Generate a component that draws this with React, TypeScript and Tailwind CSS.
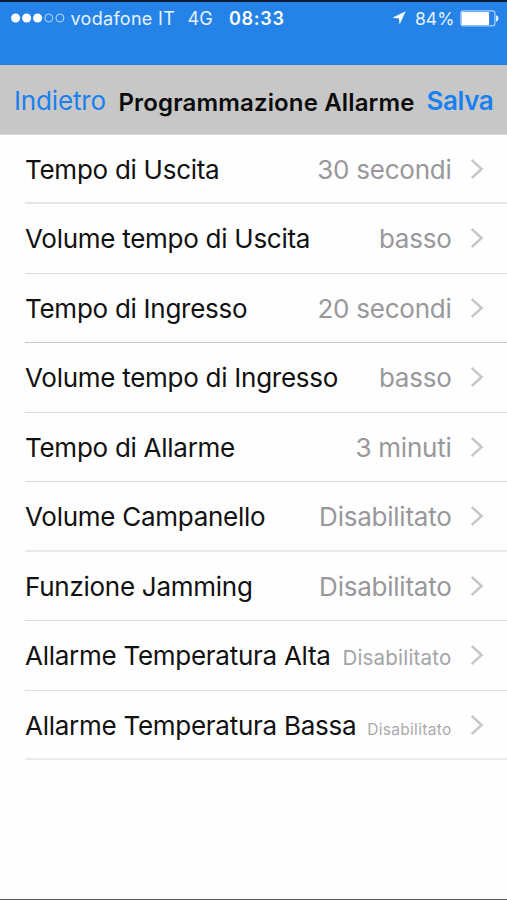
type Setting = {
  label: string;
  value: string;
  valueClass?: string;
  line: string;
};

const settings: Setting[] = [
  { label: 'Tempo di Uscita', value: '30 secondi', line: 'h-[2px] bg-[#e6e6e7]' },
  { label: 'Volume tempo di Uscita', value: 'basso', line: 'h-px bg-[#dcdcde]' },
  { label: 'Tempo di Ingresso', value: '20 secondi', line: 'h-px bg-[#c6c6c8]' },
  { label: 'Volume tempo di Ingresso', value: 'basso', line: 'h-px bg-[#dcdcde]' },
  { label: 'Tempo di Allarme', value: '3 minuti', line: 'h-px bg-[#d6d6d8]' },
  { label: 'Volume Campanello', value: 'Disabilitato', line: 'h-[2px] bg-[#e9e9ea]' },
  { label: 'Funzione Jamming', value: 'Disabilitato', line: 'h-px bg-[#dcdcde]' },
  {
    label: 'Allarme Temperatura Alta',
    value: 'Disabilitato',
    valueClass: 'text-[20.5px] leading-6 tracking-[0.2px] text-[#a3a3a6]',
    line: 'h-px bg-[#dfdfe1]',
  },
  {
    label: 'Allarme Temperatura Bassa',
    value: 'Disabilitato',
    valueClass: 'text-[15.5px] leading-5 tracking-[0.3px] text-[#a9a9ac]',
    line: 'h-[2px] bg-[#ebebec]',
  },
];

function Signal() {
  return (
    <svg className="-mt-px h-[10px] w-[54px] shrink-0" viewBox="0 0 54 10">
      <circle cx="4.6" cy="5" r="4.5" fill="#fff" />
      <circle cx="15.6" cy="5" r="4.5" fill="#fff" />
      <circle cx="26.6" cy="5" r="4.5" fill="#fff" />
      <circle cx="37.8" cy="5" r="4" fill="none" stroke="#b5d8fb" />
      <circle cx="48.9" cy="5" r="4" fill="none" stroke="#b5d8fb" />
    </svg>
  );
}

function LocationArrow() {
  return (
    <svg className="-mt-px h-[14px] w-[14px] shrink-0" viewBox="0 0 14 14">
      <path d="M13.7 0.2 L7.6 13.6 L6.9 7.4 L0.4 6.8 Z" fill="#fff" />
    </svg>
  );
}

function Battery() {
  return (
    <svg className="-mt-px h-[17px] w-[40px] shrink-0" viewBox="0 0 40 17">
      <rect x="0.9" y="0.9" width="34" height="15" rx="2.6" fill="none" stroke="#a9d1fa" strokeWidth="1.2" />
      <rect x="1.6" y="2" width="27.5" height="13" rx="1" fill="#fff" />
      <path d="M36 5.2 C39.4 6.3 39.4 10.7 36 11.8 Z" fill="#e4f1fe" />
    </svg>
  );
}

function Chevron() {
  return (
    <svg className="h-[22px] w-[14px] shrink-0" viewBox="0 0 14 22">
      <path d="M1.6 1.8 L11.6 11 L1.6 20.2" fill="none" stroke="#c7c7cb" strokeWidth="2.5" />
    </svg>
  );
}

export default function App() {
  return (
    <div className="flex h-[900px] w-[507px] flex-col overflow-hidden border-b border-[#5c5a5c] bg-[#fefefe] font-['Inter',sans-serif]">
      <header className="h-[65px] shrink-0 border-t-2 border-[#0b1a30] bg-[#2583e8] text-[#e6f2fe]">
        <div className="flex h-[33px] items-center pl-[10.5px] text-[18px] leading-[34px]">
          <Signal />
          <span className="ml-[6px] w-[117px] whitespace-nowrap tracking-[0.3px]">vodafone IT</span>
          <span className="w-[41.5px]">4G</span>
          <span className="font-semibold tracking-[0.7px] text-white">08:33</span>
          <div className="ml-auto flex items-center pr-[7.5px]">
            <LocationArrow />
            <span className="ml-[9px] w-[44.5px] text-[17.5px] whitespace-nowrap">84%</span>
            <Battery />
          </div>
        </div>
      </header>

      <nav className="flex h-[70px] shrink-0 items-start border-b border-[#d8d8d8] bg-[#c7c7c7] pl-[14px] whitespace-nowrap">
        <button className="w-[104.5px] text-left text-[26px] leading-[71px] tracking-[-0.15px] text-[#1880f0]">
          Indietro
        </button>
        <h1 className="w-[308px] text-[24px] leading-[76px] font-semibold tracking-[0.14px] text-[#0b0b0b]">
          Programmazione Allarme
        </h1>
        <button className="text-left text-[26px] leading-[71px] font-semibold tracking-[-0.4px] text-[#1880f0]">
          Salva
        </button>
      </nav>

      <ul className="-mt-[0.5px] flex flex-col pl-[25px]">
        {settings.map((item) => (
          <li key={item.label} className="flex h-[69.5px] flex-col">
            <div className="flex min-h-0 flex-1 items-baseline pr-[23px] whitespace-nowrap">
              <span className="text-[26px] leading-[70px] tracking-[-0.27px] text-[#111]">{item.label}</span>
              <span
                className={`ml-auto ${item.valueClass ?? 'text-[26px] leading-[70px] tracking-[-0.24px] text-[#98989b]'}`}
              >
                {item.value}
              </span>
              <span className="ml-[18.5px] flex h-[68px] items-center self-start">
                <Chevron />
              </span>
            </div>
            <div className={`shrink-0 ${item.line}`} />
          </li>
        ))}
      </ul>
    </div>
  );
}
